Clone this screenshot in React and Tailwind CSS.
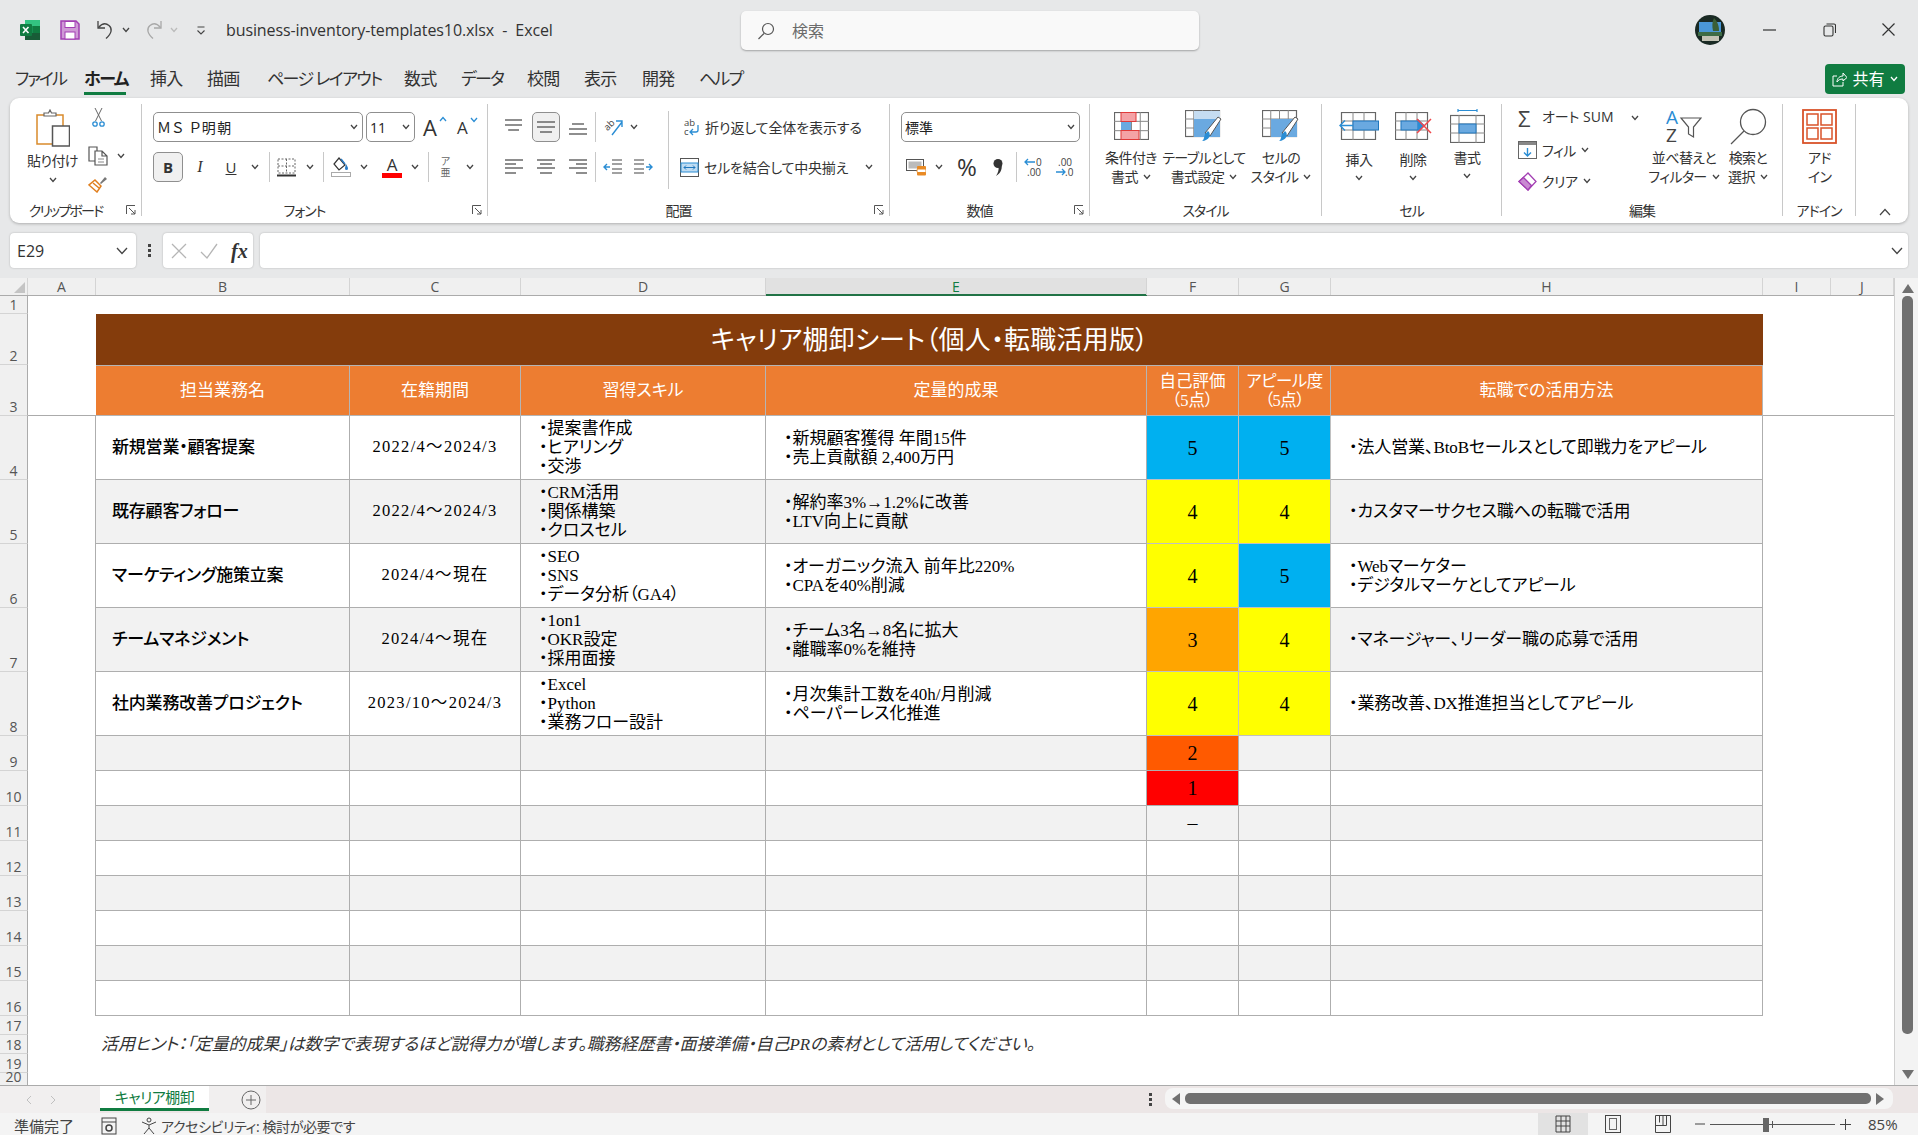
import React from 'react';

const Ic = ({ w, h, children, className = '' }) => (
  <svg width={w} height={h} viewBox={`0 0 ${w} ${h}`} fill="none" className={`shrink-0 ${className}`}>
    {children}
  </svg>
);

const Chev = ({ className = '', color = '#444' }) => (
  <svg width="8" height="6" viewBox="0 0 8 6" fill="none" className={`shrink-0 ${className}`}>
    <path d="M1 1l3 3.4L7 1" stroke={color} strokeWidth="1.3" />
  </svg>
);

const Sep = ({ className = '' }) => <div className={`w-px self-stretch bg-[#c8c8c8] shrink-0 ${className}`} />;

/* ---------- icons ---------- */
const ExcelLogo = () => (
  <Ic w={20} h={20}>
    <rect x="5" y="0" width="15" height="20" rx="1.5" fill="#21a366" />
    <rect x="5" y="0" width="15" height="6" fill="#33c481" />
    <rect x="5" y="6" width="7.5" height="7" fill="#21a366" />
    <rect x="12.5" y="6" width="7.5" height="7" fill="#107c41" />
    <rect x="5" y="13" width="15" height="7" fill="#185c37" />
    <rect x="0" y="4" width="12" height="12" rx="1" fill="#107c41" />
    <path d="M3 7l5.5 6M8.5 7L3 13" stroke="#fff" strokeWidth="1.6" />
  </Ic>
);
const SaveIcon = () => (
  <Ic w={20} h={20}>
    <path d="M1 1h15l3 3v15H1z" fill="#cf9ad6" stroke="#a33fb3" strokeWidth="1.5" />
    <rect x="5" y="1.5" width="10" height="6" fill="#fff" stroke="#a33fb3" />
    <rect x="5" y="12" width="10" height="7" fill="#fff" stroke="#a33fb3" />
  </Ic>
);
const UndoIcon = ({ color = '#444', flip }) => (
  <Ic w={18} h={20} className={flip ? '-scale-x-100' : ''}>
    <path d="M2 1v7h7" stroke={color} strokeWidth="1.3" />
    <path d="M2.5 7.5C6 3.5 10 3 13 5.5c3.5 3 3 7.500-3 13" stroke={color} strokeWidth="1.3" />
  </Ic>
);
const SearchIcon = () => (
  <Ic w={18} h={18}>
    <circle cx="11" cy="7" r="5.500" stroke="#555" strokeWidth="1.2" />
    <path d="M7 11.500L1.500 17" stroke="#555" strokeWidth="1.2" />
  </Ic>
);
const Avatar = () => (
  <Ic w={30} h={30}>
    <circle cx="15" cy="15" r="15" fill="#1a2a24" />
    <path d="M4 7h22v10H4z" fill="#4a97d6" />
    <path d="M19 3c3 3 5 7 5 13h-6c-1-5-1-9 1-13z" fill="#3a5f36" />
    <path d="M3 17h24v4H3z" fill="#3d6b45" />
    <path d="M7 21h17v5H7z" fill="#c2c2b4" />
  </Ic>
);
const PasteIcon = () => (
  <Ic w={34} h={38}>
    <rect x="1" y="6" width="26" height="29" fill="#fff" stroke="#d98a2b" strokeWidth="1.5" />
    <path d="M8 7V4h4.500l1.500-3 1.500 3H20v3z" fill="#fff" stroke="#666" strokeWidth="1.2" />
    <rect x="16.500" y="17" width="17" height="20" fill="#fff" stroke="#555" strokeWidth="1.5" />
  </Ic>
);
const Scissors = () => (
  <Ic w={13} h={20}>
    <path d="M3.500 14L10 1M9.500 14L3 1" stroke="#666" strokeWidth="1" />
    <circle cx="3" cy="17" r="2.200" stroke="#2a8dd4" strokeWidth="1.300" />
    <circle cx="10" cy="17" r="2.200" stroke="#2a8dd4" strokeWidth="1.300" />
  </Ic>
);
const CopyIcon = () => (
  <Ic w={20} h={20}>
    <path d="M8 15H1V1h8v4" stroke="#555" strokeWidth="1.200" />
    <path d="M7 5h7l5 5v9H7zM14 5v5h5" fill="#fff" stroke="#555" strokeWidth="1.200" />
    <path d="M10 13h6M10 16h6" stroke="#888" />
  </Ic>
);
const BrushIcon = () => (
  <Ic w={20} h={19}>
    <path d="M12 9l5-6 2 2-6 5z" fill="#777" />
    <path d="M7 6l6 6-4 6-8-7z" fill="#fff" stroke="#e07f1f" strokeWidth="1.500" />
    <path d="M5 9l6 5" stroke="#e07f1f" strokeWidth="1.500" />
  </Ic>
);
const BordersIcon = () => (
  <Ic w={19} h={19}>
    <path d="M1 1h17v14H1zM9.500 1v14M1 8h17" stroke="#666" strokeDasharray="2 1.500" />
    <path d="M0 17.500h19" stroke="#333" strokeWidth="2" />
  </Ic>
);
const FillIcon = () => (
  <Ic w={20} h={20}>
    <path d="M8 1l6 7-6 5-5-6z" fill="#fff" stroke="#333" strokeWidth="1.200" />
    <path d="M15 7c1 2 2 3 2 4.500a1.500 1.500 0 01-3 0c0-1 .5-2.500 1-4.500z" fill="#2a7cc7" />
    <path d="M10 2l4 5" stroke="#2a7cc7" strokeWidth="1.500" />
    <rect x="0.500" y="15.500" width="19" height="4" fill="#fff" stroke="#aaa" />
  </Ic>
);
const AlignLines = ({ lines }) => (
  <Ic w={18} h={18}>
    {lines.map(([y, x1, x2]) => (
      <path key={y} d={`M${x1} ${y}H${x2}`} stroke="#444" strokeWidth="1.200" />
    ))}
  </Ic>
);
const Orientation = () => (
  <Ic w={20} h={20}>
    <text x="2" y="12" fontSize="9.500" fill="#444" transform="rotate(-45 6 10)" fontFamily="Open Sans">ab</text>
    <path d="M9 18L19 5M13 4h6v6" stroke="#2a8dd4" strokeWidth="1.400" />
  </Ic>
);
const IndentIcon = ({ flip }) => (
  <Ic w={19} h={18} className={flip ? '-scale-x-100' : ''}>
    <path d="M9 2h10M9 6h10M9 11h10M9 15h10" stroke="#444" strokeWidth="1.200" />
    <path d="M7 9H1M4 6L1 9l3 3" stroke="#2a8dd4" strokeWidth="1.400" />
  </Ic>
);
const WrapIcon = () => (
  <Ic w={17} h={20}>
    <text x="1" y="9" fontSize="9.500" fill="#444" fontFamily="Open Sans">ab</text>
    <text x="1" y="18" fontSize="9.500" fill="#444" fontFamily="Open Sans">c</text>
    <path d="M15 8v5a2 2 0 01-2 2H7M10 12l-3 3 3 3" stroke="#2a8dd4" strokeWidth="1.300" />
  </Ic>
);
const MergeIcon = () => (
  <Ic w={19} h={19}>
    <rect x="0.500" y="0.500" width="18" height="18" fill="#fff" stroke="#555" />
    <rect x="1" y="5" width="17" height="9" fill="#bfdcf2" stroke="#2a8dd4" />
    <path d="M4 9.500h11M6 7.500l-2 2 2 2M13 7.500l2 2-2 2" stroke="#1f77bd" />
  </Ic>
);
const CurrencyIcon = () => (
  <Ic w={20} h={18}>
    <rect x="0.500" y="1.500" width="17" height="11" fill="#fff" stroke="#555" />
    <rect x="2.500" y="3.500" width="13" height="7" fill="#bbb" />
    <rect x="11" y="8" width="9" height="3.500" rx="1" fill="#e98a24" />
    <rect x="11" y="11" width="9" height="3.500" rx="1" fill="#fff" stroke="#e98a24" />
    <rect x="11" y="14" width="9" height="3.500" rx="1" fill="#e98a24" />
  </Ic>
);
const CommaIcon = () => (
  <Ic w={10} h={17}>
    <circle cx="5" cy="4.500" r="4.500" fill="#333" />
    <path d="M8 4c2 5 0 10-5 13 2-3 3-6 2.500-9z" fill="#333" />
  </Ic>
);
const DecIcon = ({ dec }) => (
  <Ic w={20} h={20}>
    {dec ? (
      <>
        <text x="3" y="9" fontSize="10" fill="#444" fontFamily="Open Sans">.00</text>
        <text x="10" y="19" fontSize="10" fill="#444" fontFamily="Open Sans">.0</text>
        <path d="M1 15h9M7 12l3 3-3 3" stroke="#2a8dd4" strokeWidth="1.300" />
      </>
    ) : (
      <>
        <text x="12" y="9" fontSize="10" fill="#444" fontFamily="Open Sans">0</text>
        <text x="3" y="19" fontSize="10" fill="#444" fontFamily="Open Sans">.00</text>
        <path d="M1 5h10M4 2L1 5l3 3" stroke="#2a8dd4" strokeWidth="1.300" />
      </>
    )}
  </Ic>
);
const GridBase = ({ w = 35, h = 28 }) => (
  <>
    <rect x="0.500" y="0.500" width={w - 1} height={h - 1} fill="#fff" stroke="#666" strokeWidth="1.200" />
    <path d={`M0 ${h / 3}H${w}M0 ${(2 * h) / 3}H${w}M${w * 0.25} 0V${h}M${w * 0.5} 0V${h}M${w * 0.75} 0V${h}`} stroke="#888" />
  </>
);
const CondIcon = () => (
  <Ic w={35} h={28}>
    <GridBase />
    <rect x="7" y="0.500" width="15" height="9" fill="#f4a2a6" stroke="#e03a3a" />
    <rect x="7" y="10" width="10" height="8" fill="#6aa9e0" />
    <rect x="7" y="18.500" width="18" height="9" fill="#f4a2a6" stroke="#e03a3a" />
  </Ic>
);
const Brush = () => (
  <>
    <path d="M20 23L33 7l3 2-11 17z" fill="#fff" stroke="#555" />
    <path d="M23 21c4 3 1 10-6 10 2-1 2-4 3-7z" fill="#2a8dd4" />
  </>
);
const TableIcon = () => (
  <Ic w={38} h={33}>
    <GridBase w={35} h={27} />
    <rect x="9" y="9" width="26" height="18" fill="#6aa9e0" />
    <rect x="9" y="1" width="26" height="8" fill="#c5dcf1" />
    <Brush />
  </Ic>
);
const CellStyleIcon = () => (
  <Ic w={38} h={33}>
    <GridBase w={35} h={27} />
    <rect x="9" y="9" width="26" height="18" fill="#6aa9e0" />
    <Brush />
  </Ic>
);
const InsertIcon = () => (
  <Ic w={40} h={28}>
    <rect x="2.500" y="0.500" width="34" height="27" fill="#fff" stroke="#666" strokeWidth="1.200" />
    <path d="M2 9h35M2 18h35M14 0v28M25 0v28" stroke="#888" />
    <rect x="14" y="9" width="25.500" height="9" fill="#6aa9e0" stroke="#1f77bd" />
    <path d="M1 13.500h13M6 8.500l-5 5 5 5" stroke="#2a8dd4" strokeWidth="1.400" />
  </Ic>
);
const DeleteIcon = () => (
  <Ic w={37} h={28}>
    <rect x="0.500" y="0.500" width="32" height="27" fill="#fff" stroke="#666" strokeWidth="1.200" />
    <path d="M0 9h33M0 18h33M11 0v28M22 0v28" stroke="#888" />
    <rect x="6" y="9" width="17" height="9" fill="#6aa9e0" stroke="#1f77bd" />
    <path d="M23 7l7 6.500-7 6.500z" fill="#2a8dd4" />
    <path d="M22 7l14 14M36 7L22 21" stroke="#f0474b" strokeWidth="1.500" />
  </Ic>
);
const FormatIcon = () => (
  <Ic w={35} h={34}>
    <path d="M8 1.500h19M8 0v3M27 0v3" stroke="#2a8dd4" strokeWidth="1.200" />
    <rect x="0.500" y="6.500" width="34" height="27" fill="#fff" stroke="#666" strokeWidth="1.200" />
    <path d="M0 15h35M0 24h35M9 6v28M26 6v28" stroke="#888" />
    <rect x="9" y="15" width="17" height="9" fill="#6aa9e0" stroke="#1f77bd" />
  </Ic>
);
const FillDown = () => (
  <Ic w={19} h={18}>
    <rect x="0.500" y="0.500" width="18" height="17" fill="#fff" stroke="#666" />
    <rect x="1" y="1" width="17" height="3" fill="#888" />
    <path d="M9.500 7v8M6 11.500l3.500 3.500 3.500-3.500" stroke="#2a8dd4" strokeWidth="1.400" />
  </Ic>
);
const Eraser = () => (
  <Ic w={19} h={19}>
    <path d="M10 1l8 8.500-8 8.500-9-8.500z" fill="#fff" stroke="#a33fb3" strokeWidth="1.300" />
    <path d="M5.500 5.500l8 8-3.500 4.500-9-8.500z" fill="#c98ad2" stroke="#a33fb3" strokeWidth="1.300" />
  </Ic>
);
const SortIcon = () => (
  <Ic w={36} h={34}>
    <text x="0" y="15" fontSize="19" fill="#2a8dd4" fontFamily="Open Sans">A</text>
    <text x="0" y="33" fontSize="19" fill="#444" fontFamily="Open Sans">Z</text>
    <path d="M15 9h20l-7.500 9v10l-5-3v-7z" fill="#fff" stroke="#555" strokeWidth="1.200" />
  </Ic>
);
const FindIcon = () => (
  <Ic w={37} h={37}>
    <circle cx="23" cy="14" r="12.500" stroke="#555" strokeWidth="1.300" fill="#fff" />
    <path d="M14 23L1 36" stroke="#555" strokeWidth="1.300" />
  </Ic>
);
const AddinIcon = () => (
  <Ic w={35} h={35}>
    <rect x="1" y="1" width="33" height="33" stroke="#d9532a" strokeWidth="1.800" />
    <rect x="5" y="5" width="11" height="11" stroke="#d9532a" strokeWidth="1.500" />
    <rect x="19" y="5" width="11" height="11" stroke="#d9532a" strokeWidth="1.500" />
    <rect x="5" y="19" width="11" height="11" stroke="#d9532a" strokeWidth="1.500" />
    <rect x="19" y="19" width="11" height="11" stroke="#d9532a" strokeWidth="1.500" />
  </Ic>
);
const Launcher = () => (
  <svg width="10" height="10" viewBox="0 0 10 10" fill="none" className="absolute right-[5px] top-0">
    <path d="M.5 9V.5H9M3 3l6 6M9 5v4H5" stroke="#555" />
  </svg>
);

/* ---------- ribbon parts ---------- */
const Group = ({ width, label, launcher, labelClass = 'tracking-[-1px]', children }) => (
  <div className={`relative flex flex-col h-[112px] shrink-0 border-r border-[#c8c8c8] ${width}`}>
    <div className="h-[101px]">{children}</div>
    <div className={`relative h-[11px] flex items-center justify-center text-[14px] text-[#333] whitespace-nowrap ${labelClass} ${launcher ? 'pr-[20px]' : ''}`}>
      {label}
      {launcher && <Launcher />}
    </div>
  </div>
);

const BigBtn = ({ width, icon, lines, labelClass = '' }) => (
  <div className={`flex flex-col items-center text-[14px] leading-[19px] text-[#333] tracking-[-0.6px] whitespace-nowrap ${width}`}>
    <div className="h-[44px] flex items-center justify-center">{icon}</div>
    <div className={labelClass}>{lines}</div>
  </div>
);

const Select = ({ width, text, textClass = '' }) => (
  <div className={`h-[30px] flex items-center justify-between rounded-[5px] border border-[#8f8f8f] bg-white pl-[3px] pr-[4px] text-[14px] text-[#222] ${width}`}>
    <span className={textClass}>{text}</span>
    <Chev />
  </div>
);

const Slot = ({ width, children }) => <div className={`flex items-center justify-center shrink-0 ${width}`}>{children}</div>;

const Ribbon = () => (
  <div className="mx-[10px] h-[125px] rounded-[9px] bg-white shadow-[0_1px_3px_rgba(0,0,0,0.25)] flex pt-[6px] text-[#333] text-[14px]">
    {/* clipboard */}
    <Group width="w-[132px]" label="クリップボード" labelClass="tracking-[-1.8px]" launcher>
      <div className="flex pt-[3px]">
        <div className="w-[78px] flex flex-col items-center pl-[7px]">
          <div className="h-[41px] flex items-center"><PasteIcon /></div>
          <div className="mt-[3px] leading-[20px] tracking-[-0.6px] whitespace-nowrap">貼り付け</div>
          <Chev className="mt-[6px]" />
        </div>
        <div className="flex flex-col items-start">
          <div className="pl-[4px] h-[34px]"><Scissors /></div>
          <div className="flex items-center gap-[9px] h-[29px]"><CopyIcon /><Chev /></div>
          <div className="mt-[4px]"><BrushIcon /></div>
        </div>
      </div>
    </Group>

    {/* font */}
    <Group width="w-[346px]" label="フォント" launcher>
      <div className="pl-[11px] pt-[8px] flex flex-col gap-[10px]">
        <div className="flex items-center">
          <Select width="w-[210px]" text="ＭＳ Ｐ明朝" textClass="tracking-[1.5px]" />
          <Select width="w-[49px] ml-[3px]" text="11" />
          <div className="ml-[8px] w-[20px] relative text-[22px] leading-none">A<Chev className="absolute right-[-4px] top-[0px] rotate-180" color="#2a8dd4" /></div>
          <div className="ml-[14px] w-[17px] relative text-[17px] leading-none">A<Chev className="absolute right-[-4px] top-[-2px]" color="#2a8dd4" /></div>
        </div>
        <div className="flex items-center h-[30px]">
          <div className="w-[30px] h-[30px] rounded-[5px] border border-[#8f8f8f] bg-[#f0f0f0] flex items-center justify-center font-bold text-[15px]">B</div>
          <Slot width="w-[34px]"><span className="italic text-[16px] font-['Liberation_Serif',serif]">I</span></Slot>
          <Slot width="w-[28px]"><span className="underline text-[15px]">U</span></Slot>
          <Slot width="w-[20px]"><Chev /></Slot>
          <div className="w-[4px]" />
          <Sep className="h-[30px]" />
          <div className="ml-[7px]"><BordersIcon /></div>
          <Slot width="w-[27px]"><Chev /></Slot>
          <Sep className="h-[30px]" />
          <div className="ml-[7px]"><FillIcon /></div>
          <Slot width="w-[26px]"><Chev /></Slot>
          <div className="ml-[5px] w-[20px] flex flex-col items-center">
            <span className="text-[17px] leading-[17px]">A</span>
            <div className="w-[20px] h-[5px] bg-[#f00]" />
          </div>
          <Slot width="w-[26px]"><Chev /></Slot>
          <Sep className="h-[30px]" />
          <Slot width="w-[33px]">
            <div className="flex flex-col items-center text-[10px] leading-[11px] text-[#666]"><span>ア</span><span>亜</span></div>
          </Slot>
          <Slot width="w-[16px]"><Chev /></Slot>
        </div>
      </div>
    </Group>

    {/* alignment */}
    <Group width="w-[402px]" label="配置" launcher>
      <div className="flex h-[95px]">
        <div className="w-[180px] pl-[17px] pt-[8px] flex flex-col gap-[10px]">
          <div className="flex items-center h-[30px]">
            <AlignLines lines={[[2, 0, 17], [7, 0, 17], [12, 3, 14]]} />
            <div className="ml-[9px] w-[28px] h-[30px] rounded-[5px] border border-[#8f8f8f] bg-[#f0f0f0] flex items-center justify-center">
              <AlignLines lines={[[4, 0, 18], [9, 0, 18], [14, 3, 15]]} />
            </div>
            <div className="ml-[9px]"><AlignLines lines={[[6, 3, 15], [11, 0, 18], [16, 0, 18]]} /></div>
            <div className="w-[8px]" />
            <Sep className="h-[30px]" />
            <div className="ml-[7px]"><Orientation /></div>
            <Slot width="w-[21px]"><Chev /></Slot>
          </div>
          <div className="flex items-center h-[30px]">
            <AlignLines lines={[[2, 0, 18], [6, 0, 11], [10, 0, 18], [15, 0, 11]]} />
            <div className="ml-[14px]"><AlignLines lines={[[2, 0, 18], [6, 3, 15], [10, 0, 18], [15, 3, 15]]} /></div>
            <div className="ml-[14px]"><AlignLines lines={[[2, 0, 18], [6, 7, 18], [10, 0, 18], [15, 7, 18]]} /></div>
            <div className="w-[8px]" />
            <Sep className="h-[30px]" />
            <div className="ml-[7px]"><IndentIcon /></div>
            <div className="ml-[12px]"><IndentIcon flip /></div>
          </div>
        </div>
        <Sep className="mt-[7px] mb-[10px]" />
        <div className="flex-1 pt-[8px] flex flex-col gap-[10px] text-[14px] tracking-[-0.1px] whitespace-nowrap">
          <div className="flex items-center h-[30px] pl-[14px] gap-[5px]"><WrapIcon />折り返して全体を表示する</div>
          <div className="flex items-center h-[30px] pl-[11px] gap-[5px]">
            <MergeIcon />
            <span className="w-[155px] tracking-[-0.2px]">セルを結合して中央揃え</span>
            <Chev className="ml-[1px]" />
          </div>
        </div>
      </div>
    </Group>

    {/* number */}
    <Group width="w-[200px]" label="数値" launcher>
      <div className="pl-[11px] pt-[8px] flex flex-col gap-[10px]">
        <Select width="w-[179px]" text="標準" />
        <div className="flex items-center h-[30px] pl-[5px]">
          <CurrencyIcon />
          <Slot width="w-[26px]"><Chev /></Slot>
          <div className="ml-[5px] w-[22px] text-[24px] leading-none">%</div>
          <Slot width="w-[37px]"><CommaIcon /></Slot>
          <Sep className="h-[30px]" />
          <div className="ml-[7px]"><DecIcon /></div>
          <div className="ml-[11px]"><DecIcon dec /></div>
        </div>
      </div>
    </Group>

    {/* style */}
    <Group width="w-[232px]" label="スタイル">
      <div className="flex pl-[7px]">
        <BigBtn width="w-[68px]" icon={<CondIcon />} lines={<div className="text-center">条件付き<br /><span className="inline-flex items-center gap-[5px]">書式<Chev /></span></div>} />
        <BigBtn width="w-[78px]" icon={<TableIcon />} lines={<div className="text-center">テーブルとして<br /><span className="inline-flex items-center gap-[5px]">書式設定<Chev /></span></div>} />
        <BigBtn width="w-[76px]" icon={<CellStyleIcon />} lines={<div className="text-center">セルの<br /><span className="inline-flex items-center gap-[5px]">スタイル<Chev /></span></div>} />
      </div>
    </Group>

    {/* cells */}
    <Group width="w-[180px]" label="セル">
      <div className="flex pl-[10px]">
        <BigBtn width="w-[54px]" icon={<InsertIcon />} lines={<div className="flex flex-col items-center"><span>挿入</span><Chev className="mt-[6px]" /></div>} labelClass="pt-[2px]" />
        <BigBtn width="w-[54px]" icon={<DeleteIcon />} lines={<div className="flex flex-col items-center"><span>削除</span><Chev className="mt-[6px]" /></div>} labelClass="pt-[2px]" />
        <BigBtn width="w-[54px]" icon={<FormatIcon />} lines={<div className="flex flex-col items-center"><span>書式</span><Chev className="mt-[6px]" /></div>} />
      </div>
    </Group>

    {/* editing */}
    <Group width="w-[281px]" label="編集">
      <div className="flex">
        <div className="w-[148px] pl-[16px] flex flex-col tracking-[-0.5px]">
          <div className="h-[28px] flex items-center gap-[6px]">
            <span className="text-[22px] leading-none w-[18px] text-[#444]">Σ</span>
            <span className="w-[83px] whitespace-nowrap -mt-[3px] tracking-[0px]">オート SUM</span>
            <Chev />
          </div>
          <div className="h-[36px] flex items-center gap-[5px]"><FillDown /><span>フィル</span><Chev /></div>
          <div className="h-[26px] flex items-center gap-[5px]"><Eraser /><span>クリア</span><Chev /></div>
        </div>
        <BigBtn width="w-[68px]" icon={<SortIcon />} lines={<div className="text-center">並べ替えと<br /><span className="inline-flex items-center gap-[5px]">フィルター<Chev /></span></div>} />
        <BigBtn width="w-[60px]" icon={<FindIcon />} lines={<div className="text-center">検索と<br /><span className="inline-flex items-center gap-[5px]">選択<Chev /></span></div>} />
      </div>
    </Group>

    {/* add-ins */}
    <Group width="w-[73px]" label="アドイン">
      <BigBtn width="w-[73px]" icon={<AddinIcon />} lines={<div className="text-center">アド<br />イン</div>} />
    </Group>

    <div className="flex-1 h-[112px] flex items-end justify-end pb-[0px] pr-[17px]">
      <svg width="12" height="8" viewBox="0 0 12 8" fill="none"><path d="M1 7l5-5.500L11 7" stroke="#444" strokeWidth="1.200" /></svg>
    </div>
  </div>
);

/* ---------- sheet ---------- */
const COLS = ['A', 'B', 'C', 'D', 'E', 'F', 'G', 'H', 'I', 'J'];
const COL_CLASS = 'grid grid-cols-[28px_68px_254px_171px_245px_381px_92px_92px_432px_68px_63px]';

const cellFont = "font-['Liberation_Serif','Noto_Sans_CJK_JP',serif]";
const scoreBg = { 5: 'bg-[#00b0f0]', 4: 'bg-[#ffff00]', 3: 'bg-[#ffa500]', 2: 'bg-[#ff5a00]', 1: 'bg-[#ff0000]' };

const DATA = [
  ['新規営業・顧客提案', '2022/4～2024/3', ['・提案書作成', '・ヒアリング', '・交渉'], ['・新規顧客獲得 年間15件', '・売上貢献額 2,400万円'], 5, 5, ['・法人営業、BtoBセールスとして即戦力をアピール']],
  ['既存顧客フォロー', '2022/4～2024/3', ['・CRM活用', '・関係構築', '・クロスセル'], ['・解約率3%→1.2%に改善', '・LTV向上に貢献'], 4, 4, ['・カスタマーサクセス職への転職で活用']],
  ['マーケティング施策立案', '2024/4～現在', ['・SEO', '・SNS', '・データ分析（GA4）'], ['・オーガニック流入 前年比220%', '・CPAを40%削減'], 4, 5, ['・Webマーケター', '・デジタルマーケとしてアピール']],
  ['チームマネジメント', '2024/4～現在', ['・1on1', '・OKR設定', '・採用面接'], ['・チーム3名→8名に拡大', '・離職率0%を維持'], 3, 4, ['・マネージャー、リーダー職の応募で活用']],
  ['社内業務改善プロジェクト', '2023/10～2024/3', ['・Excel', '・Python', '・業務フロー設計'], ['・月次集計工数を40h/月削減', '・ペーパーレス化推進'], 4, 4, ['・業務改善、DX推進担当としてアピール']],
];

const RowHead = ({ n, line = true }) => (
  <div className={`bg-[#f0f0f0] flex items-end justify-center text-[14px] leading-[17px] text-[#555] font-['Open_Sans',sans-serif] border-r border-[#ababab] ${line ? 'border-b border-b-[#d4d4d4]' : ''}`}>
    {n}
  </div>
);

const Lines = ({ items, className = '' }) => (
  <div className={`flex flex-col justify-center text-[17px] leading-[19px] whitespace-nowrap ${className}`}>
    {items.map((t) => <div key={t}>{t}</div>)}
  </div>
);

const Sheet = () => {
  const border = 'border-r border-b border-[#aeaeae]';
  const head = 'bg-[#ed7d31] text-white flex items-center justify-center text-center border-r border-b border-t border-[#b5b5b5]';
  return (
    <div className={`${COL_CLASS} grid-rows-[18px_51px_51px_64px_64px_64px_64px_64px_35px_35px_35px_35px_35px_35px_35px_35px_19px_19px_19px_12px] w-[1894px] h-[789px] bg-white overflow-hidden text-black ${cellFont}`}>
      {/* row 1 */}
      <RowHead n={1} />
      <div className="col-span-10" />
      {/* row 2 */}
      <RowHead n={2} />
      <div />
      <div className="col-span-7 bg-[#843c0c] text-white flex items-center justify-center text-[26px] tracking-[0.2px] pt-[2px]">
        キャリア棚卸シート（個人・転職活用版）
      </div>
      <div className="col-span-2" />
      {/* row 3 */}
      <RowHead n={3} />
      <div className="border-b border-[#ababab]" />
      {['担当業務名', '在籍期間', '習得スキル', '定量的成果'].map((t) => (
        <div key={t} className={`${head} text-[17px]`}>{t}</div>
      ))}
      <div className={`${head} text-[16.500px] leading-[19px]`}>自己評価<br />（5点）</div>
      <div className={`${head} text-[16.500px] leading-[19px] tracking-[-0.5px]`}>アピール度<br />（5点）</div>
      <div className={`${head} text-[17px]`}>転職での活用方法</div>
      <div className="col-span-2 border-b border-[#ababab]" />

      {/* rows 4 to 8 */}
      {DATA.map((r, i) => {
        const bg = i % 2 ? 'bg-[#f2f2f2]' : 'bg-white';
        return (
          <React.Fragment key={r[0]}>
            <RowHead n={i + 4} />
            <div className="border-r border-[#aeaeae]" />
            <div className={`${bg} ${border} flex items-center pl-[16px] text-[17px] font-medium tracking-[-0.2px] whitespace-nowrap`}>{r[0]}</div>
            <div className={`${bg} ${border} flex items-center justify-center text-[16.500px] tracking-[1.3px]`}>{r[1]}</div>
            <Lines items={r[2]} className={`${bg} ${border} pl-[18px]`} />
            <Lines items={r[3]} className={`${bg} ${border} pl-[18px]`} />
            <div className={`${scoreBg[r[4]]} border-r border-b border-[#c0c0c0] flex items-center justify-center text-[20px]`}>{r[4]}</div>
            <div className={`${scoreBg[r[5]]} border-r border-b border-[#c0c0c0] flex items-center justify-center text-[20px]`}>{r[5]}</div>
            <Lines items={r[6]} className={`${bg} ${border} pl-[18px] tracking-[-0.1px]`} />
            <div className="col-span-2" />
          </React.Fragment>
        );
      })}

      {/* rows 9 to 16 */}
      {[9, 10, 11, 12, 13, 14, 15, 16].map((n) => {
        const bg = n % 2 ? 'bg-[#f2f2f2]' : 'bg-white';
        const f = { 9: '2', 10: '1', 11: '–' }[n];
        const fbg = n === 9 ? scoreBg[2] : n === 10 ? scoreBg[1] : bg;
        return (
          <React.Fragment key={n}>
            <RowHead n={n} />
            <div className="border-r border-[#aeaeae]" />
            <div className={`${bg} ${border}`} />
            <div className={`${bg} ${border}`} />
            <div className={`${bg} ${border}`} />
            <div className={`${bg} ${border}`} />
            <div className={`${fbg} ${border} flex items-center justify-center text-[20px]`}>{f}</div>
            <div className={`${bg} ${border}`} />
            <div className={`${bg} ${border}`} />
            <div className="col-span-2" />
          </React.Fragment>
        );
      })}

      {/* rows 17 to 20 */}
      <RowHead n={17} />
      <div className="col-span-10" />
      <RowHead n={18} />
      <div />
      <div className="col-span-9 italic text-[17px] tracking-[-0.1px] text-[#333] whitespace-nowrap flex items-center pl-[5px]">
        活用ヒント：「定量的成果」は数字で表現するほど説得力が増します。職務経歴書・面接準備・自己PRの素材として活用してください。
      </div>
      <RowHead n={19} />
      <div className="col-span-10" />
      <RowHead n={20} line={false} />
      <div className="col-span-10" />
    </div>
  );
};

const ColHeaders = () => (
  <div className={`${COL_CLASS} w-[1894px] h-[18px] bg-[#f0f0f0] border-b border-[#ababab] text-[14px] leading-[17px] text-[#555]`}>
    <div className="flex justify-end items-end pr-[2px] pb-[2px] border-r border-[#d4d4d4]">
      <div className="w-0 h-0 border-l-[11px] border-l-transparent border-b-[11px] border-b-[#c4c4c4]" />
    </div>
    {COLS.map((c) => (
      <div key={c} className={`flex items-center justify-center border-r border-[#d4d4d4] ${c === 'E' ? 'bg-[#e1e1e1] text-[#107c41] shadow-[0_1px_0_#217346,inset_0_-1px_0_#217346]' : ''}`}>{c}</div>
    ))}
  </div>
);

const VScroll = () => (
  <div className="w-[24px] h-full bg-[#f3f3f3] border-l border-[#d0d0d0] flex flex-col items-center pl-[2px]">
    <svg width="12" height="9" viewBox="0 0 12 9" className="mt-[6px]"><path d="M6 0l6 9H0z" fill="#707070" /></svg>
    <div className="mt-[3px] w-[11px] h-[738px] rounded-[5px] bg-[#707070]" />
    <svg width="12" height="9" viewBox="0 0 12 9" className="mt-[36px]"><path d="M6 9L0 0h12z" fill="#707070" /></svg>
  </div>
);

export default function App() {
  return (
    <div className="w-[1918px] h-[1135px] overflow-hidden bg-[#e7e8e9] font-['Open_Sans','Noto_Sans_CJK_JP',sans-serif] [font-feature-settings:'palt'] flex flex-col">
      {/* title bar */}
      <div className="h-[64px] flex shrink-0">
        <div className="flex items-start pt-[20px] pl-[20px]">
          <ExcelLogo />
          <div className="ml-[20px]"><SaveIcon /></div>
          <div className="ml-[16px]"><UndoIcon /></div>
          <Chev className="ml-[8px] mt-[7px]" />
          <div className="ml-[15px]"><UndoIcon color="#a8a8a8" flip /></div>
          <Chev className="ml-[7px] mt-[7px]" color="#bbb" />
          <svg width="10" height="10" viewBox="0 0 10 10" fill="none" className="ml-[18px] mt-[6px]"><path d="M1.500 1h7M1.500 4.500L5 8l3.500-3.500" stroke="#444" strokeWidth="1.100" /></svg>
          <div className="ml-[20px] -mt-[1px] text-[16px] leading-[22px] text-[#333] whitespace-pre tracking-[-0.1px]">business-inventory-templates10.xlsx  -  Excel</div>
        </div>
        <div className="absolute left-[741px] top-[11px] w-[458px] h-[39px] rounded-[5px] bg-[#f9f9f9] shadow-[0_1px_2px_rgba(0,0,0,0.3)] flex items-center pl-[16px] gap-[17px] text-[16px] text-[#6b6b6b]">
          <SearchIcon />検索
        </div>
        <div className="ml-auto flex items-start pt-[15px] pr-[23px]">
          <Avatar />
          <svg width="13" height="2" viewBox="0 0 13 2" className="ml-[38px] mt-[14px]"><path d="M0 1h13" stroke="#333" strokeWidth="1.200" /></svg>
          <svg width="13" height="14" viewBox="0 0 13 14" fill="none" className="ml-[47px] mt-[8px]"><rect x="1" y="3" width="9" height="10" rx="1.500" stroke="#333" strokeWidth="1.100" /><path d="M3.500 1H11a1.500 1.500 0 011.500 1.500V10" stroke="#333" strokeWidth="1.100" /></svg>
          <svg width="13" height="13" viewBox="0 0 13 13" fill="none" className="ml-[46px] mt-[8px]"><path d="M.5.5l12 12M12.500.5l-12 12" stroke="#333" strokeWidth="1.200" /></svg>
        </div>
      </div>

      {/* menu tabs */}
      <div className="h-[34px] flex items-start shrink-0 pl-[15px] text-[17px] leading-[30px] text-[#333] tracking-[-0.8px] whitespace-nowrap">
        <span className="w-[46px] tracking-[-2px]">ファイル</span>
        <span className="relative w-[42px] ml-[23px] font-bold text-[#222] tracking-[-1.500px]">ホーム<span className="absolute left-0 right-0 top-[28px] h-[3px] bg-[#107c41]" /></span>
        <span className="w-[33px] ml-[24px]">挿入</span>
        <span className="w-[34px] ml-[24px]">描画</span>
        <span className="w-[112px] ml-[26px] tracking-[-1.600px]">ページ レイアウト</span>
        <span className="w-[33px] ml-[25px]">数式</span>
        <span className="w-[41px] ml-[24px] tracking-[-1.800px]">データ</span>
        <span className="w-[33px] ml-[25px]">校閲</span>
        <span className="w-[33px] ml-[24px]">表示</span>
        <span className="w-[33px] ml-[25px]">開発</span>
        <span className="w-[41px] ml-[24px] tracking-[-1.800px]">ヘルプ</span>
        <div className="ml-auto mr-[13px] w-[80px] h-[30px] rounded-[4px] bg-[#107c41] text-white text-[16px] flex items-center justify-center gap-[5px] tracking-normal">
          <svg width="15" height="15" viewBox="0 0 15 15" fill="none"><path d="M5 4H1v10h10v-4M5 10c0-4 3-6 6-6V1l4 4.500L11 9V7c-3 0-5 1-6 3z" stroke="#fff" /></svg>
          共有
          <Chev color="#fff" />
        </div>
      </div>

      <Ribbon />

      {/* formula bar */}
      <div className="mt-[10px] h-[35px] mx-[10px] flex items-stretch shrink-0">
        <div className="w-[126px] rounded-[4px] bg-white shadow-[0_0_2px_rgba(0,0,0,0.25)] flex items-center justify-between pl-[7px] pr-[8px] text-[16px] text-[#333]">
          E29
          <svg width="12" height="8" viewBox="0 0 12 8" fill="none"><path d="M1 1l5 5.500L11 1" stroke="#444" strokeWidth="1.300" /></svg>
        </div>
        <div className="w-[27px] flex flex-col items-center justify-center gap-[2px]">
          <i className="w-[3px] h-[3px] bg-[#444]" /><i className="w-[3px] h-[3px] bg-[#444]" /><i className="w-[3px] h-[3px] bg-[#444]" />
        </div>
        <div className="w-[90px] rounded-[4px] bg-white shadow-[0_0_2px_rgba(0,0,0,0.25)] flex items-center pl-[8px] gap-[13px]">
          <svg width="16" height="16" viewBox="0 0 16 16" fill="none"><path d="M1 1l14 14M15 1L1 15" stroke="#b5b5b5" strokeWidth="1.300" /></svg>
          <svg width="18" height="16" viewBox="0 0 18 16" fill="none"><path d="M1 9l6 6L17 1" stroke="#b5b5b5" strokeWidth="1.300" /></svg>
          <span className="italic font-bold text-[20px] leading-none font-['Liberation_Serif',serif] text-[#333]">fx</span>
        </div>
        <div className="ml-[7px] flex-1 rounded-[4px] bg-white shadow-[0_0_2px_rgba(0,0,0,0.25)] flex items-center justify-end pr-[5px]">
          <svg width="12" height="8" viewBox="0 0 12 8" fill="none"><path d="M1 1l5 5.500L11 1" stroke="#444" strokeWidth="1.300" /></svg>
        </div>
      </div>

      {/* sheet + scrollbar */}
      <div className="mt-[10px] flex h-[807px] shrink-0">
        <div className="flex flex-col">
          <ColHeaders />
          <Sheet />
        </div>
        <VScroll />
      </div>

      {/* sheet tabs */}
      <div className="h-[28px] flex shrink-0 border-t border-[#ababab] bg-[#ece6e6]">
        <div className="w-[100px] bg-[#f1efef] flex items-center gap-[18px] pl-[26px]">
          <svg width="6" height="10" viewBox="0 0 6 10" fill="none"><path d="M5 1L1 5l4 4" stroke="#c0c0c0" /></svg>
          <svg width="6" height="10" viewBox="0 0 6 10" fill="none"><path d="M1 1l4 4-4 4" stroke="#c0c0c0" /></svg>
        </div>
        <div className="w-[109px] h-[25px] bg-white border-b-[3px] border-[#107c41] text-[15px] text-[#107c41] flex items-center justify-center tracking-[-0.5px]">キャリア棚卸</div>
        <div className="w-[57px] bg-[#f1efef] flex items-center justify-end pr-[5px]">
          <svg width="20" height="20" viewBox="0 0 20 20" fill="none"><circle cx="10" cy="10" r="9" stroke="#666" /><path d="M10 5v10M5 10h10" stroke="#666" /></svg>
        </div>
        <div className="ml-auto w-[6px] flex flex-col items-center justify-center gap-[2px]">
          <i className="w-[3px] h-[3px] bg-[#444]" /><i className="w-[3px] h-[3px] bg-[#444]" /><i className="w-[3px] h-[3px] bg-[#444]" />
        </div>
        <div className="ml-[12px] mr-[25px] mt-[2px] w-[728px] h-[21px] rounded-[8px] bg-[#f5f5f5] flex items-center px-[7px] gap-[5px]">
          <svg width="8" height="12" viewBox="0 0 8 12"><path d="M8 0v12L0 6z" fill="#707070" /></svg>
          <div className="w-[686px] h-[11px] rounded-[5px] bg-[#707070]" />
          <svg width="8" height="12" viewBox="0 0 8 12"><path d="M0 0v12l8-6z" fill="#707070" /></svg>
        </div>
      </div>

      {/* status bar */}
      <div className="h-[22px] flex items-center shrink-0 bg-[#f4f4f4] text-[14px] text-[#444] whitespace-nowrap pl-[14px]">
        <span className="w-[60px] pt-[5px] text-[15px]">準備完了</span>
        <svg width="16" height="18" viewBox="0 0 16 18" fill="none" className="ml-[27px] mt-[4px]"><rect x="1" y="1" width="14" height="16" stroke="#444" /><path d="M1 5h14" stroke="#444" /><circle cx="8" cy="11" r="3" stroke="#444" strokeWidth="1.500" /></svg>
        <svg width="16" height="18" viewBox="0 0 16 18" fill="none" className="ml-[24px] mt-[4px]"><circle cx="8" cy="3" r="2" stroke="#444" /><path d="M1 5l7 3 7-3M8 8v3M3 17l5-6 5 6" stroke="#444" /></svg>
        <span className="ml-[4px] pt-[5px] tracking-[-0.4px]">アクセシビリティ: 検討が必要です</span>
        <div className="ml-auto flex items-center h-full">
          <div className="w-[50px] h-full bg-[#e2e2e2] flex items-center justify-center">
            <svg width="16" height="18" viewBox="0 0 16 18" fill="none"><path d="M1 1h14v16H1zM1 6h14M1 11h14M6 1v16M11 1v16" stroke="#444" /></svg>
          </div>
          <div className="w-[50px] flex items-center justify-center">
            <svg width="16" height="18" viewBox="0 0 16 18" fill="none"><rect x=".5" y=".5" width="15" height="17" stroke="#444" /><rect x="4.500" y="3.500" width="7" height="11" stroke="#666" /></svg>
          </div>
          <div className="w-[50px] flex items-center justify-center">
            <svg width="16" height="18" viewBox="0 0 16 18" fill="none"><path d="M.5.5h15v17H.5zM.5 10.500H8V.5M4.500.5v7M11.500.5v10H8" stroke="#444" /></svg>
          </div>
          <svg width="10" height="2" viewBox="0 0 10 2" className="ml-[7px]"><path d="M0 1h10" stroke="#444" /></svg>
          <div className="ml-[5px] w-[125px] h-[12px] flex items-center relative">
            <div className="w-full h-px bg-[#555]" />
            <div className="absolute left-[53px] top-0 w-[6px] h-[14px] bg-[#666]" />
            <div className="absolute left-[62px] top-[3px] w-px h-[7px] bg-[#555]" />
          </div>
          <svg width="11" height="11" viewBox="0 0 11 11" className="ml-[5px]"><path d="M0 5.500h11M5.500 0v11" stroke="#444" /></svg>
          <span className="ml-[17px] mr-[14px] w-[36px] text-[15px] text-[#444]">85%</span>
        </div>
      </div>
    </div>
  );
}
